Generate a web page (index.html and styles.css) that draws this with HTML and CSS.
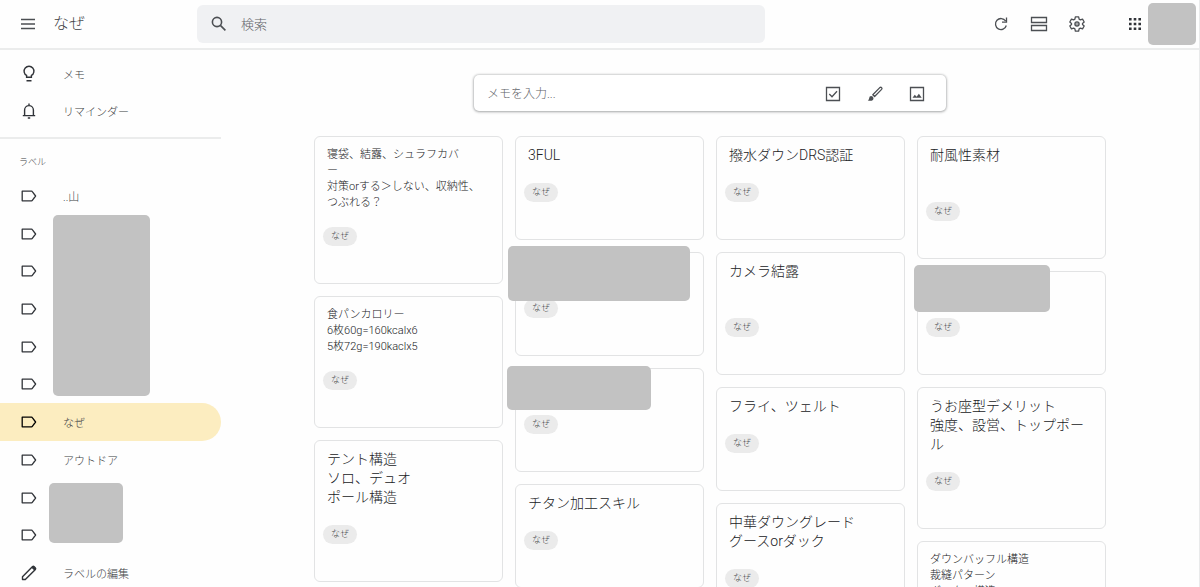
FILE: index.html
```html
<!DOCTYPE html>
<html lang="ja">
<head>
<meta charset="utf-8">
<meta name="viewport" content="width=device-width, initial-scale=1">
<title>なぜ</title>
<link rel="stylesheet" href="styles.css">
</head>
<body>
<svg class="defs" width="0" height="0" aria-hidden="true">
  <symbol id="label" viewBox="0 0 18 18"><path d="M2.2 4.2h9.3q.6 0 1 .6L15.6 9l-3.1 4.2q-.4.6-1 .6H2.2z" fill="none" stroke="currentColor" stroke-width="1.3" stroke-linejoin="round"/></symbol>
</svg>
<header class="topbar">
  <button class="icon-btn menu" aria-label="メニュー"><svg width="16" height="16" viewBox="0 0 16 16"><path d="M1 3.5h14M1 8h14M1 12.500h14" stroke="currentColor" stroke-width="1.300"/></svg></button>
  <h1 class="title">なぜ</h1>
  <form class="search" role="search">
    <button type="button" class="icon-btn" aria-label="検索"><svg width="18" height="18" viewBox="0 0 18 18" fill="none" stroke="currentColor" stroke-width="1.600"><circle cx="7" cy="7" r="4.600"/><path d="M10.400 10.400l5 5"/></svg></button>
    <input type="text" placeholder="検索" aria-label="検索">
  </form>
  <div class="actions">
    <button class="icon-btn" aria-label="更新"><svg width="18" height="18" viewBox="0 0 18 18" fill="none" stroke="currentColor" stroke-width="1.300"><path d="M14.300 10.500A5.500 5.500 0 1 1 13.600 6M14.500 2.500v4.600H10"/></svg></button>
    <button class="icon-btn" aria-label="リスト表示"><svg width="18" height="18" viewBox="0 0 18 18" fill="none" stroke="currentColor" stroke-width="1.300"><path d="M1.500 2.500h15v5h-15zM1.500 10.500h15v5h-15z"/></svg></button>
    <button class="icon-btn" aria-label="設定"><svg width="18" height="18" viewBox="0 0 24 24" fill="none" stroke="currentColor" stroke-width="1.700" stroke-linejoin="round"><path d="M9.800 2.500h4.400l.6 3 1.700 1 2.900-1 2.200 3.800-2.300 2v1.400l2.300 2-2.200 3.800-2.900-1-1.700 1-.6 3H9.800l-.6-3-1.700-1-2.900 1-2.200-3.800 2.300-2v-1.400l-2.300-2 2.200-3.800 2.900 1 1.700-1z"/><circle cx="12" cy="12" r="2.800" fill="currentColor" fill-opacity=".5"/></svg></button>
    <button class="icon-btn apps" aria-label="アプリ"><svg width="18" height="18" viewBox="0 0 18 18" fill="currentColor"><path d="M3 3h2.600v2.600H3zM7.700 3h2.600v2.600H7.700zM12.400 3H15v2.600h-2.600zM3 7.700h2.600v2.600H3zM7.700 7.700h2.600v2.600H7.700zM12.400 7.700H15v2.600h-2.600zM3 12.400h2.600V15H3zM7.700 12.400h2.600V15H7.700zM12.400 12.400H15V15h-2.600z"/></svg></button>
    <span class="avatar"></span>
  </div>
</header>
<div class="layout">
  <nav class="sidebar">
    <ul class="nav-list nav-main">
      <li><a href="#"><svg width="18" height="18" viewBox="0 0 18 18" fill="none" stroke="currentColor" stroke-width="1.400"><path d="M6.600 12.300v-1.900a4.900 4.900 0 1 1 4.800 0v1.900zM6.500 15.800h5"/></svg>メモ</a></li>
      <li><a href="#"><svg width="18" height="18" viewBox="0 0 18 18" fill="none" stroke="currentColor" stroke-width="1.400"><path d="M2.800 13.600h12.400M4.600 13.600V8a4.400 4.400 0 0 1 8.800 0v5.600M9 1.500v2M7.800 16h2.400"/></svg>リマインダー</a></li>
    </ul>
    <h2 class="nav-heading">ラベル</h2>
    <ul class="nav-list nav-labels">
      <li><a href="#"><svg width="18" height="18"><use href="#label"/></svg>..山</a></li>
      <li><a href="#" aria-label="ラベル"><svg width="18" height="18"><use href="#label"/></svg></a><span class="mask mask-tall"></span></li>
      <li><a href="#" aria-label="ラベル"><svg width="18" height="18"><use href="#label"/></svg></a></li>
      <li><a href="#" aria-label="ラベル"><svg width="18" height="18"><use href="#label"/></svg></a></li>
      <li><a href="#" aria-label="ラベル"><svg width="18" height="18"><use href="#label"/></svg></a></li>
      <li><a href="#" aria-label="ラベル"><svg width="18" height="18"><use href="#label"/></svg></a></li>
      <li><a href="#" class="active" aria-current="page"><svg width="18" height="18"><use href="#label"/></svg>なぜ</a></li>
      <li><a href="#"><svg width="18" height="18"><use href="#label"/></svg>アウトドア</a></li>
      <li><a href="#" aria-label="ラベル"><svg width="18" height="18"><use href="#label"/></svg></a><span class="mask mask-short"></span></li>
      <li><a href="#" aria-label="ラベル"><svg width="18" height="18"><use href="#label"/></svg></a></li>
      <li><a href="#"><svg width="18" height="18" viewBox="0 0 18 18" fill="none" stroke="currentColor" stroke-width="1.400" stroke-linejoin="round"><path d="M2.500 15.500v-2.800L12.600 2.600q.7-.6 1.400 0l1.400 1.400q.6.700 0 1.400L5.300 15.500z"/><path d="M11.500 3.700l1.800-1.500 2.500 2.500-1.500 1.800z" fill="currentColor" stroke="none"/></svg>ラベルの編集</a></li>
    </ul>
  </nav>
  <main class="content">
    <div class="composer">
      <input type="text" placeholder="メモを入力..." aria-label="メモを入力">
      <button class="icon-btn" aria-label="新しいリスト"><svg width="18" height="18" viewBox="0 0 18 18" fill="none" stroke="currentColor" stroke-width="1.300"><path d="M2.500 2.500h13v13h-13zM5.300 9l2.700 2.700 5-5.500"/></svg></button>
      <button class="icon-btn" aria-label="図形描画"><svg width="18" height="18" viewBox="0 0 18 18" fill="none" stroke="currentColor" stroke-width="1.300" stroke-linejoin="round"><path d="M6.800 9.800L13.800 2.600q1-.8 1.800 0 .8.900 0 1.800L8.600 11.500z"/><path d="M1.800 15.300q1.400-.6 1.400-2.300 0-2 2-2 2.300.2 2.300 2.200-.2 2.600-3.200 2.600-1.600 0-2.500-.5z" fill="currentColor" stroke="none"/></svg></button>
      <button class="icon-btn" aria-label="画像"><svg width="18" height="18" viewBox="0 0 18 18"><path d="M2.500 2.500h13v13h-13z" fill="none" stroke="currentColor" stroke-width="1.300"/><path d="M4.500 12.800l2.300-3 1.800 2 2.300-3 2.800 4z" fill="currentColor"/></svg></button>
    </div>
    <div class="board">
      <div class="column">
        <article class="note small"><p>寝袋、結露、シュラフカバ<br>ー<br>対策orする＞しない、収納性、<br>つぶれる？</p><a class="chip" href="#">なぜ</a></article>
        <article class="note small"><p>食パンカロリー<br>6枚60g=160kcalx6<br>5枚72g=190kaclx5</p><a class="chip" href="#">なぜ</a></article>
        <article class="note"><p>テント構造<br>ソロ、デュオ<br>ポール構造</p><a class="chip" href="#">なぜ</a></article>
      </div>
      <div class="column">
        <article class="note"><p>3FUL</p><a class="chip" href="#">なぜ</a></article>
        <article class="note"><p></p><a class="chip" href="#">なぜ</a><span class="mask mask-a"></span></article>
        <article class="note"><p></p><a class="chip" href="#">なぜ</a><span class="mask mask-b"></span></article>
        <article class="note"><p>チタン加工スキル</p><a class="chip" href="#">なぜ</a></article>
      </div>
      <div class="column">
        <article class="note"><p>撥水ダウンDRS認証</p><a class="chip" href="#">なぜ</a></article>
        <article class="note roomy"><p>カメラ結露</p><a class="chip" href="#">なぜ</a></article>
        <article class="note"><p>フライ、ツェルト</p><a class="chip" href="#">なぜ</a></article>
        <article class="note"><p>中華ダウングレード<br>グースorダック</p><a class="chip" href="#">なぜ</a></article>
      </div>
      <div class="column">
        <article class="note roomy"><p>耐風性素材</p><a class="chip" href="#">なぜ</a></article>
        <article class="note"><p></p><a class="chip" href="#">なぜ</a><span class="mask mask-c"></span></article>
        <article class="note"><p>うお座型デメリット<br>強度、設営、トップポー<br>ル</p><a class="chip" href="#">なぜ</a></article>
        <article class="note small"><p>ダウンバッフル構造<br>裁縫パターン<br>ボックス構造</p><a class="chip" href="#">なぜ</a></article>
      </div>
    </div>
  </main>
</div>
</body>
</html>
```
FILE: styles.css
```css
* { box-sizing: border-box; }
body {
  margin: 0;
  height: 100vh;
  display: flex;
  flex-direction: column;
  overflow: hidden;
  background: #fefefe;
  border-right: 1px solid #e9eaeb;
  color: #3c4043;
  font-family: Roboto, "Noto Sans CJK JP", sans-serif;
  font-size: 11px;
  font-weight: 300;
}
h1, h2, p, ul { margin: 0; padding: 0; font-weight: inherit; }
ul { list-style: none; }
a { color: inherit; text-decoration: none; }
svg { display: block; flex: none; }
.defs { position: absolute; }
input {
  flex: 1;
  min-width: 0;
  border: 0;
  padding: 0;
  background: none;
  font: inherit;
  color: inherit;
  outline: none;
}
input::placeholder { color: #5f6368; opacity: 1; }
.icon-btn {
  display: flex;
  padding: 0;
  border: 0;
  background: none;
  color: #4c4f53;
  cursor: pointer;
}

.topbar {
  flex: none;
  height: 50px;
  display: flex;
  align-items: center;
  padding: 0 3px 0 20px;
  border-bottom: 2px solid #ebecec;
}
.title {
  width: 144px;
  margin-left: 17px;
  font-size: 16px;
  line-height: 24px;
}
.search {
  flex: 0 1 568px;
  height: 38px;
  display: flex;
  align-items: center;
  gap: 13px;
  padding: 0 13px;
  border-radius: 6px;
  background: #f0f1f3;
  font-size: 13px;
}
.actions {
  flex: none;
  margin-left: auto;
  display: flex;
  align-items: center;
  gap: 20px;
}
.actions .apps { margin-left: 20px; color: #303338; }
.avatar {
  width: 48px;
  height: 42px;
  margin-left: -16px;
  border-radius: 5px;
  background: #c2c2c2;
}

.layout { flex: 1; min-height: 0; display: flex; }
.sidebar { flex: none; width: 221px; padding-top: 5px; }
.nav-list { display: grid; grid-auto-rows: 1fr; }
.nav-list li { position: relative; }
.nav-list a {
  height: 100%;
  display: flex;
  align-items: center;
  gap: 25px;
  padding-left: 20px;
  border-radius: 0 19px 19px 0;
}
.nav-list svg { color: #303338; }
.nav-list .active { background: #fcedc0; }
.nav-list .active svg { color: #000; }
.nav-main { height: 84px; padding-bottom: 8px; border-bottom: 2px solid #ebecec; }
.nav-heading {
  height: 38px;
  padding: 15px 19px 0;
  font-size: 9px;
  line-height: 16px;
}
.nav-labels { height: 415px; }

.content { flex: 1; min-width: 0; overflow: hidden; padding-top: 25px; }
.composer {
  width: 472px;
  max-width: 100%;
  height: 36px;
  margin: 0 auto 25px;
  display: flex;
  align-items: center;
  gap: 24px;
  padding: 1px 20px 0 13px;
  border-radius: 5px;
  background: #fff;
  box-shadow: 0 0 2px 1px rgba(60, 64, 67, 0.2), 0 1px 3px rgba(60, 64, 67, 0.3);
  font-size: 12px;
}
.board {
  display: flex;
  justify-content: center;
  align-items: flex-start;
  gap: 12px;
}
.column {
  flex: 0 1 189px;
  min-width: 0;
  display: flex;
  flex-direction: column;
  gap: 12px;
}
.note {
  position: relative;
  padding: 9px 8px 37px;
  border: 1px solid #e2e3e4;
  border-radius: 6px;
  color: #202124;
  font-size: 14px;
  line-height: 19px;
}
.note p {
  min-height: 19px;
  margin: 0 0 18px;
  padding: 0 4px;
  white-space: nowrap;
}
.note.small { padding-top: 10px; font-size: 11px; line-height: 16px; }
.note.small p { margin-bottom: 16px; }
.note.roomy p { min-height: 38px; }
.chip {
  display: block;
  width: fit-content;
  padding: 0 8px;
  border-radius: 10px;
  background: #ebebeb;
  color: #3c4043;
  font-size: 9px;
  line-height: 19px;
}

/* Blanked-out areas lying over labels and notes */
.mask {
  position: absolute;
  z-index: 1;
  border-radius: 5px;
  background: #c2c2c2;
}
.mask-tall { left: 53px; top: 0; width: 97px; height: 181px; }
.mask-short { left: 49px; top: 4px; width: 74px; height: 60px; }
.mask-a { left: -8px; top: -7px; width: 182px; height: 55px; }
.mask-b { left: -9px; top: -3px; width: 144px; height: 44px; }
.mask-c { left: -4px; top: -7px; width: 136px; height: 47px; }
```
